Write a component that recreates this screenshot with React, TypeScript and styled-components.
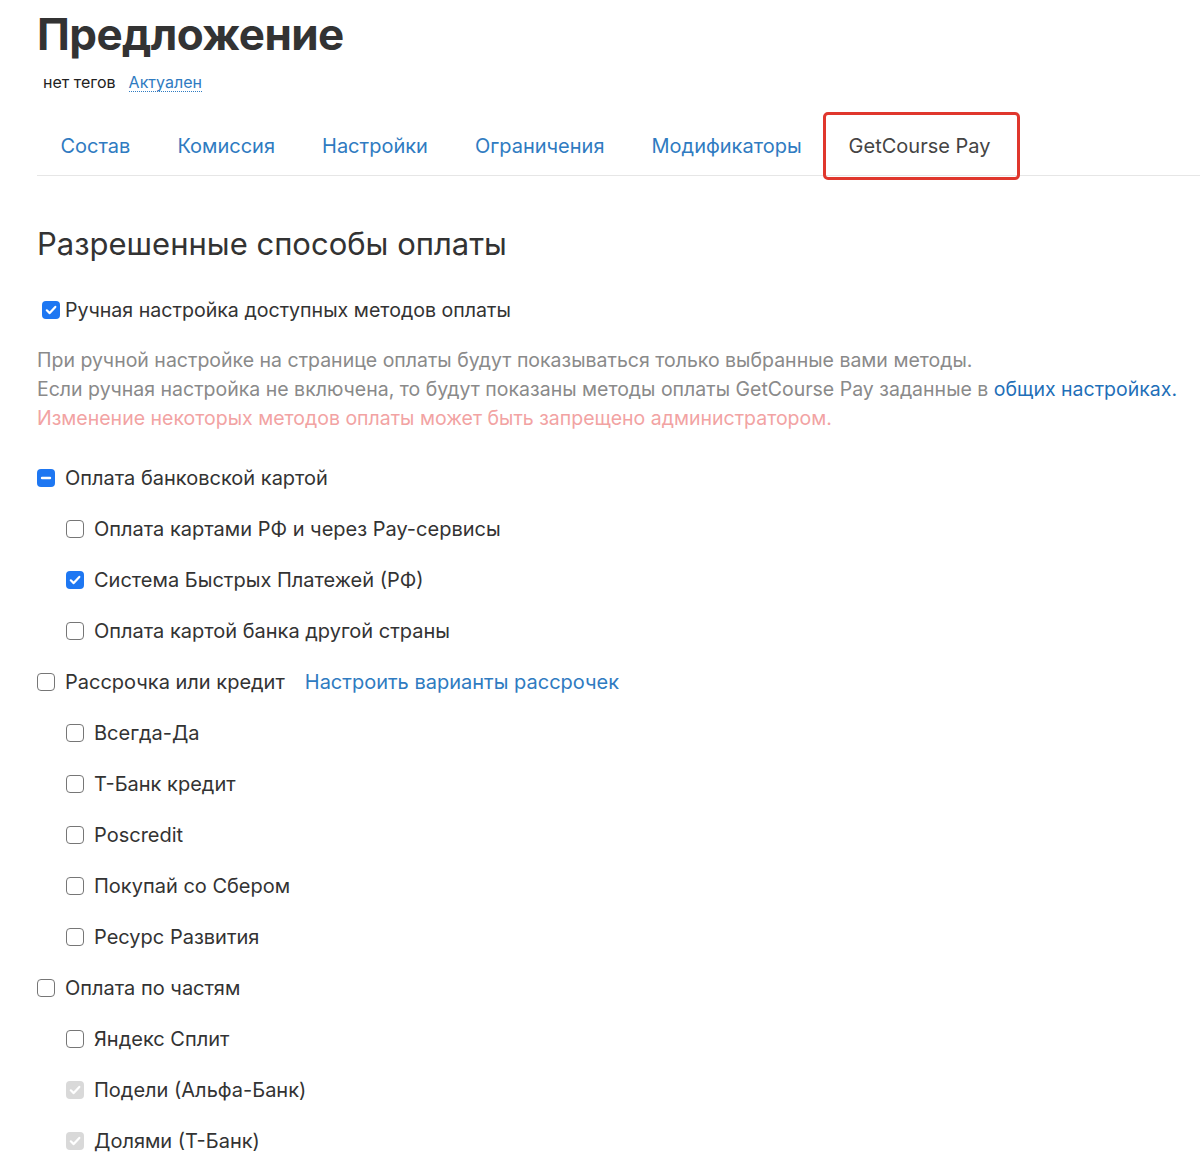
import React from "react";
import styled, { createGlobalStyle, css } from "styled-components";

const Global = createGlobalStyle`
  html, body { margin: 0; padding: 0; background: #fff; }
  body { font-family: Inter, "Noto Sans", "Liberation Sans", sans-serif; color: #333; }
`;

const Page = styled.div`
  padding: 6px 0 0 37px;
  width: 1163px;
  overflow: hidden;
`;

const Title = styled.h1`
  margin: 0;
  font-size: 44px;
  line-height: 56px;
  font-weight: 700;
  letter-spacing: -0.6px;
  color: #333;
`;

const Meta = styled.div`
  display: flex;
  align-items: center;
  gap: 13px;
  padding-left: 6px;
  margin-top: 10px;
  font-size: 16px;
  line-height: 20px;
`;

const Tag = styled.span`
  color: #222;
`;

const Status = styled.a`
  color: #2f7bc1;
  text-decoration: none;
  border-bottom: 1px dotted #2f7bc1;
  line-height: 18px;
`;

const Tabs = styled.nav`
  display: flex;
  margin-top: 25px;
  border-bottom: 1px solid #e6e6e6;
`;

const Tab = styled.a<{ $active?: boolean }>`
  position: relative;
  padding: 17px 23.5px;
  font-size: 20px;
  line-height: 24px;
  color: #2f7bc1;
  text-decoration: none;
  ${(p) =>
    p.$active &&
    css`
      color: #444;
      &::after {
        content: "";
        position: absolute;
        left: -2px;
        right: -6px;
        top: -5px;
        bottom: -5px;
        border: 3px solid #e0372d;
        border-radius: 5px;
      }
    `}
`;

const Heading = styled.h2`
  margin: 48px 0 0;
  font-size: 31px;
  line-height: 40px;
  font-weight: 400;
  color: #333;
`;

const ManualRow = styled.label`
  display: flex;
  align-items: center;
  gap: 5px;
  margin-top: 34px;
  padding-left: 5px;
  font-size: 19.6px;
  line-height: 24px;
  color: #333;
`;

const Help = styled.div`
  margin-top: 24px;
  font-size: 19.5px;
  line-height: 29px;
  color: #8a8a8a;
  white-space: nowrap;
`;

const Warn = styled.div`
  color: #f2a3a3;
`;

const Link = styled.a`
  color: #1f6fb8;
  text-decoration: none;
`;

const List = styled.div`
  display: flex;
  flex-direction: column;
  gap: 27px;
  margin-top: 33px;
`;

const Row = styled.label<{ $child?: boolean }>`
  display: flex;
  align-items: center;
  gap: 10px;
  padding-left: ${(p) => (p.$child ? "29px" : "0")};
  font-size: 20px;
  line-height: 24px;
  color: #333;
`;

const RowLink = styled.a`
  color: #2f7bc1;
  text-decoration: none;
  margin-left: 10px;
`;

type BoxState = "off" | "on" | "mixed" | "disabled";

const Box = styled.span<{ $state: BoxState }>`
  flex: none;
  width: 18px;
  height: 18px;
  box-sizing: border-box;
  border-radius: 4px;
  display: inline-flex;
  align-items: center;
  justify-content: center;
  ${(p) =>
    p.$state === "off"
      ? css`
          border: 1.5px solid #767676;
          background: #fff;
        `
      : p.$state === "disabled"
      ? css`
          background: #d9d9d9;
        `
      : css`
          background: #1e77f2;
        `}
`;

function Check({ state }: { state: BoxState }) {
  return (
    <Box $state={state}>
      {state === "on" || state === "disabled" ? (
        <svg width="14" height="14" viewBox="0 0 14 14">
          <path d="M2.8 7.3 L5.7 10.1 L11.3 3.9" fill="none" stroke="#fff" strokeWidth="2.2" strokeLinecap="round" strokeLinejoin="round" />
        </svg>
      ) : state === "mixed" ? (
        <svg width="14" height="14" viewBox="0 0 14 14">
          <path d="M3 7 H11" stroke="#fff" strokeWidth="2.4" strokeLinecap="round" />
        </svg>
      ) : null}
    </Box>
  );
}

type Item = { label: string; state: BoxState; child?: boolean; link?: string };

const items: Item[] = [
  { label: "Оплата банковской картой", state: "mixed" },
  { label: "Оплата картами РФ и через Pay-сервисы", state: "off", child: true },
  { label: "Система Быстрых Платежей (РФ)", state: "on", child: true },
  { label: "Оплата картой банка другой страны", state: "off", child: true },
  { label: "Рассрочка или кредит", state: "off", link: "Настроить варианты рассрочек" },
  { label: "Всегда-Да", state: "off", child: true },
  { label: "Т-Банк кредит", state: "off", child: true },
  { label: "Poscredit", state: "off", child: true },
  { label: "Покупай со Сбером", state: "off", child: true },
  { label: "Ресурс Развития", state: "off", child: true },
  { label: "Оплата по частям", state: "off" },
  { label: "Яндекс Сплит", state: "off", child: true },
  { label: "Подели (Альфа-Банк)", state: "disabled", child: true },
  { label: "Долями (Т-Банк)", state: "disabled", child: true },
];

const tabs = ["Состав", "Комиссия", "Настройки", "Ограничения", "Модификаторы", "GetCourse Pay"];

export default function App() {
  return (
    <Page>
      <Global />
      <Title>Предложение</Title>
      <Meta>
        <Tag>нет тегов</Tag>
        <Status href="#">Актуален</Status>
      </Meta>
      <Tabs>
        {tabs.map((t, i) => (
          <Tab key={t} href="#" $active={i === tabs.length - 1}>
            {t}
          </Tab>
        ))}
      </Tabs>
      <Heading>Разрешенные способы оплаты</Heading>
      <ManualRow>
        <Check state="on" />
        Ручная настройка доступных методов оплаты
      </ManualRow>
      <Help>
        <div>При ручной настройке на странице оплаты будут показываться только выбранные вами методы.</div>
        <div>
          Если ручная настройка не включена, то будут показаны методы оплаты GetCourse Pay заданные в{" "}
          <Link href="#">общих настройках.</Link>
        </div>
        <Warn>Изменение некоторых методов оплаты может быть запрещено администратором.</Warn>
      </Help>
      <List>
        {items.map((it) => (
          <Row key={it.label} $child={it.child}>
            <Check state={it.state} />
            <span>{it.label}</span>
            {it.link && <RowLink href="#">{it.link}</RowLink>}
          </Row>
        ))}
      </List>
    </Page>
  );
}
